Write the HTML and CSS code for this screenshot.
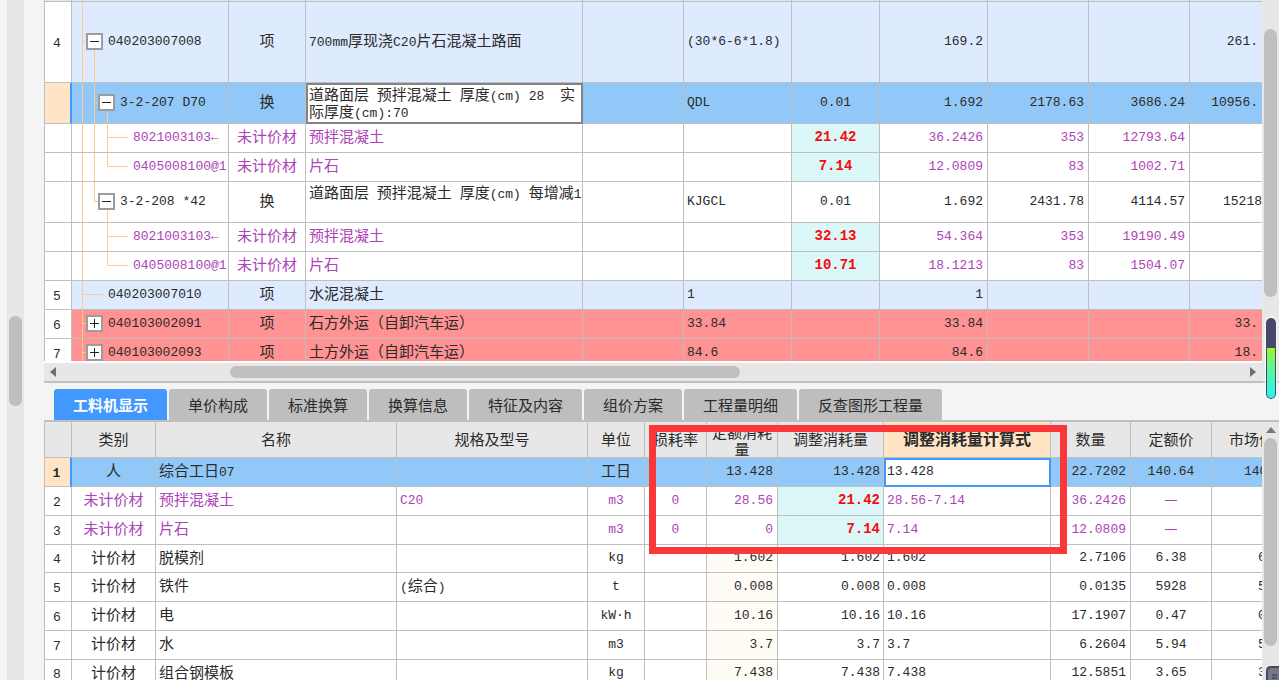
FILE: index.html
```html
<!DOCTYPE html>
<html lang="zh-CN">
<head>
<meta charset="utf-8">
<title>工料机显示</title>
<link rel="stylesheet" href="styles.css">
</head>
<body>
<div class="app">
  <aside class="rail"><div class="rail-track"><div class="rail-thumb"></div></div></aside>
  <main class="main">
    <section class="pane pane-top">
      <div class="pane-body">
        <div class="view">
          <table class="grid">
            <colgroup><col class="w28"><col class="w157"><col class="w77"><col><col class="w101"><col class="w108"><col class="w88"><col class="w108"><col class="w101"><col class="w101"><col class="w72"></colgroup>
            <tbody>
            <tr class="sliver"><td></td><td class="tree"></td><td></td><td></td><td></td><td></td><td></td><td></td><td></td><td></td><td></td></tr>
            <tr class="item tall"><td class="idx">4</td><td class="tree v2-bottom"><div class="node l1"><i class="tick"></i><button class="box" aria-label="折叠"><svg viewBox="0 0 13 13"><path d="M2 6.5h9"/></svg></button><span class="n">040203007008</span></div></td><td class="c">项</td><td><span class="n">700mm</span>厚现浇<span class="n">C20</span>片石混凝土路面</td><td></td><td class="n">(30*6-6*1.8)</td><td></td><td class="n r">169.2</td><td></td><td></td><td class="n r">261.</td></tr>
            <tr class="active mid"><td class="idx"></td><td class="tree v2 v3-bottom"><div class="node l2"><i class="tick"></i><button class="box" aria-label="折叠"><svg viewBox="0 0 13 13"><path d="M2 6.5h9"/></svg></button><span class="n">3-2-207 D70</span></div></td><td class="c">换</td><td class="editing">道路面层<span class="n"> </span>预拌混凝土<span class="n"> </span>厚度<span class="n">(cm) 28  </span>实际厚度<span class="n">(cm):70</span></td><td></td><td class="n">QDL</td><td class="n c">0.01</td><td class="n r">1.692</td><td class="n r">2178.63</td><td class="n r">3686.24</td><td class="n r">10956.</td></tr>
            <tr class="sub"><td class="idx"></td><td class="tree v2 v3"><div class="node l3"><i class="tick"></i><span class="n">8021003103←</span></div></td><td class="c">未计价材</td><td>预拌混凝土</td><td></td><td></td><td class="n c hot">21.42</td><td class="n r">36.2426</td><td class="n r">353</td><td class="n r">12793.64</td><td></td></tr>
            <tr class="sub"><td class="idx"></td><td class="tree v2 v3-top"><div class="node l3"><i class="tick"></i><span class="n">0405008100@1</span></div></td><td class="c">未计价材</td><td>片石</td><td></td><td></td><td class="n c hot">7.14</td><td class="n r">12.0809</td><td class="n r">83</td><td class="n r">1002.71</td><td></td></tr>
            <tr class="mid"><td class="idx"></td><td class="tree v2-top v3-bottom"><div class="node l2"><i class="tick"></i><button class="box" aria-label="折叠"><svg viewBox="0 0 13 13"><path d="M2 6.5h9"/></svg></button><span class="n">3-2-208 *42</span></div></td><td class="c">换</td><td class="top">道路面层<span class="n"> </span>预拌混凝土<span class="n"> </span>厚度<span class="n">(cm) </span>每增减<span class="n">1</span></td><td></td><td class="n">KJGCL</td><td class="n c">0.01</td><td class="n r">1.692</td><td class="n r">2431.78</td><td class="n r">4114.57</td><td class="n r flush">15218</td></tr>
            <tr class="sub"><td class="idx"></td><td class="tree v3"><div class="node l3"><i class="tick"></i><span class="n">8021003103←</span></div></td><td class="c">未计价材</td><td>预拌混凝土</td><td></td><td></td><td class="n c hot">32.13</td><td class="n r">54.364</td><td class="n r">353</td><td class="n r">19190.49</td><td></td></tr>
            <tr class="sub"><td class="idx"></td><td class="tree v3-top"><div class="node l3"><i class="tick"></i><span class="n">0405008100@1</span></div></td><td class="c">未计价材</td><td>片石</td><td></td><td></td><td class="n c hot">10.71</td><td class="n r">18.1213</td><td class="n r">83</td><td class="n r">1504.07</td><td></td></tr>
            <tr class="item"><td class="idx">5</td><td class="tree"><div class="node l1 leaf"><i class="tick"></i><span class="n">040203007010</span></div></td><td class="c">项</td><td>水泥混凝土</td><td></td><td class="n">1</td><td></td><td class="n r">1</td><td></td><td></td><td></td></tr>
            <tr class="alert"><td class="idx">6</td><td class="tree"><div class="node l1"><i class="tick"></i><button class="box" aria-label="展开"><svg viewBox="0 0 13 13"><path d="M2 6.5h9M6.5 2v9"/></svg></button><span class="n">040103002091</span></div></td><td class="c">项</td><td>石方外运（自卸汽车运）</td><td></td><td class="n">33.84</td><td></td><td class="n r">33.84</td><td></td><td></td><td class="n r">33.</td></tr>
            <tr class="alert"><td class="idx">7</td><td class="tree"><div class="node l1"><i class="tick"></i><button class="box" aria-label="展开"><svg viewBox="0 0 13 13"><path d="M2 6.5h9M6.5 2v9"/></svg></button><span class="n">040103002093</span></div></td><td class="c">项</td><td>土方外运（自卸汽车运）</td><td></td><td class="n">84.6</td><td></td><td class="n r">84.6</td><td></td><td></td><td class="n r">18.</td></tr>
            </tbody>
          </table>
        </div>
        <div class="vscroll"><div class="vthumb thumb-top"></div></div>
      </div>
      <div class="hscroll">
        <svg class="arrow" viewBox="0 0 6 10"><path d="M6 0v10L0 5z"/></svg>
        <div class="htrack"><div class="hthumb"></div></div>
        <svg class="arrow" viewBox="0 0 6 10"><path d="M0 0v10l6-5z"/></svg>
      </div>
      <div class="meter"><div class="meter-fill"></div></div>
    </section>
    <nav class="tabs" role="tablist">
      <button class="tab on" role="tab" aria-selected="true">工料机显示</button>
      <button class="tab" role="tab">单价构成</button>
      <button class="tab" role="tab">标准换算</button>
      <button class="tab" role="tab">换算信息</button>
      <button class="tab" role="tab">特征及内容</button>
      <button class="tab" role="tab">组价方案</button>
      <button class="tab" role="tab">工程量明细</button>
      <button class="tab" role="tab">反查图形工程量</button>
    </nav>
    <section class="pane pane-bottom">
      <div class="pane-body">
        <div class="view">
          <table class="grid detail">
            <colgroup><col class="w28"><col class="w84"><col><col class="w191"><col class="w57"><col class="w62"><col class="w71"><col class="w106"><col class="w167"><col class="w80"><col class="w81"><col class="w50"></colgroup>
            <thead><tr><th></th><th>类别</th><th>名称</th><th>规格及型号</th><th>单位</th><th>损耗率</th><th class="wrap">定额消耗量</th><th>调整消耗量</th><th class="cur" id="formula">调整消耗量计算式</th><th>数量</th><th>定额价</th><th class="cut-head">市场价</th></tr></thead>
            <tbody>
            <tr class="active"><td class="idx">1</td><td class="c">人</td><td>综合工日<span class="n">07</span></td><td></td><td class="c">工日</td><td></td><td class="n r">13.428</td><td class="n r tight">13.428</td><td class="field"><input type="text" value="13.428" aria-labelledby="formula"></td><td class="n r">22.7202</td><td class="n c">140.64</td><td class="n cut-wide">140</td></tr>
            <tr class="sub"><td class="idx">2</td><td class="c">未计价材</td><td>预拌混凝土</td><td class="n">C20</td><td class="n c">m3</td><td class="n c">0</td><td class="n r">28.56</td><td class="n r tight hot">21.42</td><td class="n">28.56-7.14</td><td class="n r">36.2426</td><td class="c">—</td><td></td></tr>
            <tr class="sub"><td class="idx">3</td><td class="c">未计价材</td><td>片石</td><td></td><td class="n c">m3</td><td class="n c">0</td><td class="n r">0</td><td class="n r tight hot">7.14</td><td class="n">7.14</td><td class="n r">12.0809</td><td class="c">—</td><td></td></tr>
            <tr><td class="idx">4</td><td class="c">计价材</td><td>脱模剂</td><td></td><td class="n c">kg</td><td></td><td class="n r warm">1.602</td><td class="n r tight">1.602</td><td class="n">1.602</td><td class="n r">2.7106</td><td class="n c">6.38</td><td class="n cut">6</td></tr>
            <tr><td class="idx">5</td><td class="c">计价材</td><td>铁件</td><td><span class="n">(</span>综合<span class="n">)</span></td><td class="n c">t</td><td></td><td class="n r warm">0.008</td><td class="n r tight">0.008</td><td class="n">0.008</td><td class="n r">0.0135</td><td class="n c">5928</td><td class="n cut">5</td></tr>
            <tr><td class="idx">6</td><td class="c">计价材</td><td>电</td><td></td><td class="n c">kW·h</td><td></td><td class="n r warm">10.16</td><td class="n r tight">10.16</td><td class="n">10.16</td><td class="n r">17.1907</td><td class="n c">0.47</td><td class="n cut">0</td></tr>
            <tr><td class="idx">7</td><td class="c">计价材</td><td>水</td><td></td><td class="n c">m3</td><td></td><td class="n r warm">3.7</td><td class="n r tight">3.7</td><td class="n">3.7</td><td class="n r">6.2604</td><td class="n c">5.94</td><td class="n cut">5</td></tr>
            <tr><td class="idx">8</td><td class="c">计价材</td><td>组合钢模板</td><td></td><td class="n c">kg</td><td></td><td class="n r warm">7.438</td><td class="n r tight">7.438</td><td class="n">7.438</td><td class="n r">12.5851</td><td class="n c">3.65</td><td class="n cut">3</td></tr>
            </tbody>
          </table>
        </div>
        <div class="vscroll detail-scroll"><svg class="arrow-up" viewBox="0 0 10 6"><path d="M0 6h10L5 0z"/></svg><div class="vthumb thumb-bottom"></div></div>
      </div>
      <div class="mark"></div>
      <svg class="badge" viewBox="0 0 13 14"><path d="M0 14V5Q0 0 5 0h8v14z" fill="#484860"/><path d="M2 14V6q0-4 4-4h7v12z" fill="#74788a"/><path d="M6 9h5M6 12h5" stroke="#2c2c40"/></svg>
    </section>
  </main>
</div>
</body>
</html>
```

FILE: styles.css
```css
* { box-sizing: border-box; }
body {
  margin: 0;
  background: #f4f4f4;
  color: #2b2b2b;
  font: 15px/17px "Noto Sans CJK SC", sans-serif;
}
button, input { font: inherit; color: inherit; }
.app { display: flex; height: 100vh; overflow: hidden; }

.rail { flex: none; width: 44px; padding-left: 7px; }
.rail-track { width: 17px; height: 100%; padding: 316px 2px 0; background: #e7e7e7; }
.rail-thumb { height: 90px; border-radius: 6px; background: #bfbfbf; }

.main { flex: 1; min-width: 0; display: flex; flex-direction: column; }
.pane { position: relative; display: flex; flex-direction: column; min-height: 0; }
.pane-top { flex: 383 1 0; border-bottom: 2px solid #c0c0c0; }
.pane-bottom { flex: 259 1 0; }
.pane-body { flex: 1; display: flex; min-height: 0; }
.view { flex: 1; min-width: 0; overflow: hidden; background: #fff; }
.pane-top .view { border-bottom: 2px solid #fff; }

.vscroll { flex: none; width: 17px; padding: 29px 2px 0; background: #e7e7e7; }
.vthumb { width: 13px; border-radius: 7px; background: #bfbfbf; }
.thumb-top { height: 268px; }
.detail-scroll { display: flex; flex-direction: column; align-items: center; gap: 2px; padding-top: 5px; }
.thumb-bottom { height: 208px; }
.arrow-up { width: 10px; height: 6px; fill: #77777e; margin-bottom: 3px; }
.hscroll { flex: none; height: 18px; display: flex; align-items: center; padding: 0 23px 0 6px; background: #e7e7e7; }
.arrow { flex: none; width: 6px; height: 10px; fill: #707078; }
.htrack { flex: 1; padding: 0 0 0 174px; }
.hthumb { width: 50%; height: 12px; border-radius: 6px; background: #bfbfbf; }

.meter {
  position: absolute;
  z-index: 2;
  right: 3px;
  bottom: -18px;
  width: 10px;
  height: 81px;
  padding-top: 30px;
  border-radius: 5px;
  background: #48486a;
  box-shadow: 0 0 3px 1px #fff;
  overflow: hidden;
}
.meter-fill { height: 50px; margin: 0 1px; border-radius: 0 0 5px 5px; background: linear-gradient(#96f825, #55f8a0 45%, #27f3f3); }

.grid { width: 100%; table-layout: fixed; border-collapse: separate; border-spacing: 0; }
.w28 { width: 28px; } .w50 { width: 50px; } .w57 { width: 57px; } .w62 { width: 62px; }
.w71 { width: 71px; } .w72 { width: 72px; } .w77 { width: 77px; } .w80 { width: 80px; }
.w81 { width: 81px; } .w84 { width: 84px; } .w88 { width: 88px; } .w101 { width: 101px; }
.w106 { width: 106px; } .w108 { width: 108px; } .w157 { width: 157px; } .w167 { width: 167px; }
.w191 { width: 191px; }

.grid td, .grid th {
  padding: 0 3px 5px;
  border-right: 1px solid #bfbfbf;
  border-bottom: 1px solid #bfbfbf;
  white-space: nowrap;
  overflow: hidden;
}
.grid td:last-child, .grid th:last-child { border-right: 0; }
.grid tr > :first-child { border-left: 1px solid #bfbfbf; }
.grid td { height: 29px; }
.grid .sliver td { height: 2px; padding: 0; background-color: #e2e6ee; }
.grid .tall td { height: 81px; }
.grid .mid td { height: 41px; }
.detail tr:nth-child(4n) td { height: 28px; }

.n { font-family: "Liberation Mono", "Noto Sans CJK SC", monospace; font-size: 13px; line-height: 15px; }
.grid td.n { padding-bottom: 2px; }
td > span.n { line-height: 0; }
.grid .c { text-align: center; }
.grid .r { text-align: right; padding-right: 4px; }
.grid .tight { padding-right: 3px; }
.grid .flush { padding-right: 0; }
.grid .top { vertical-align: top; padding-top: 1px; white-space: pre; }

.item td { background-color: #deeafe; }
.active td { background-color: #92c8f7; }
.alert td { background-color: #ff9292; }
.sub td { color: #ac44b8; }
.grid .idx { padding: 2px 2px 0 0; background: #fff; color: #2b2b2b; text-align: center; font: 13px/15px "Liberation Mono", monospace; }
.grid .active .idx { background: #ffe5c5; border-right: 2px solid #4398fb; font-weight: bold; }
.grid .hot { background: #dbf7f7; color: #f80b0b; font-weight: bold; font-size: 14px; }
.grid .warm { background: #fffbf5; }
.grid .editing { padding: 0 1px; border: 2px solid #848484; background: #fff; white-space: pre-wrap; vertical-align: top; }

/* tree guides: three vertical strokes, each full, upper half or lower half */
.grid .tree {
  --h2: 0; --h3: 0; --y2: 0; --y3: 0;
  padding: 0 0 2px;
  background-image: linear-gradient(#ffcb90, #ffcb90), linear-gradient(#ffcb90, #ffcb90), linear-gradient(#ffcb90, #ffcb90);
  background-repeat: no-repeat;
  background-size: 1px 100%, 1px var(--h2), 1px var(--h3);
  background-position: 10px 0, 22px var(--y2), 35px var(--y3);
}
.grid .v2 { --h2: 100%; }
.grid .v2-top { --h2: 50%; }
.grid .v2-bottom { --h2: 50%; --y2: 100%; }
.grid .v3 { --h3: 100%; }
.grid .v3-top { --h3: 50%; }
.grid .v3-bottom { --h3: 50%; --y3: 100%; }
.grid .sliver .tree { padding: 0; }
.node { display: flex; align-items: center; }
.l1 { padding-left: 10px; }
.l2 { padding-left: 22px; }
.l3 { padding-left: 35px; }
.tick { flex: none; width: 4px; height: 1px; background: #ffcb90; }
.l3 .tick, .leaf .tick { width: 21px; margin-right: 5px; }
.box { flex: none; width: 17px; height: 17px; margin-right: 5px; padding: 0; border: 2px solid #9c9c9c; background: #fff; }
.box svg { display: block; width: 13px; height: 13px; fill: none; stroke: #222; }

.tabs { flex: none; display: flex; gap: 2px; padding: 6px 10px 0; border-bottom: 2px solid #bfbfbf; }
.tab { height: 31px; padding: 0 19px; border: 0; border-radius: 3px 3px 0 0; background: #bebebe; white-space: nowrap; }
.tab.on { background: #4398ff; color: #fff; font-weight: bold; }

.grid th { height: 36px; padding: 0 0 2px; background: #e7e7e7; font-weight: normal; }
.grid .wrap { white-space: normal; padding: 0 4px; }
.grid .cur { background: #ffe5c5; font-weight: bold; font-size: 16px; }
.grid .cut-head { text-align: left; padding-left: 17px; }
.grid .cut-wide { padding: 0 0 2px 32px; text-overflow: clip; }
.grid .cut { padding: 0 0 2px 46px; text-overflow: clip; }
.grid .field { padding: 0; border: 0; }
.field input {
  display: block;
  width: 100%;
  height: 29px;
  padding: 0 1px 2px;
  border: 2px solid #4398fb;
  border-radius: 0;
  background: #fff;
  font: 13px/15px "Liberation Mono", monospace;
}

/* highlight drawn over the consumption columns */
.mark { position: absolute; z-index: 3; top: 3px; right: 212px; width: 418px; height: 129px; border: 7px solid #fb3838; pointer-events: none; }
.badge { position: absolute; right: 0; bottom: 0; width: 13px; height: 14px; }
```
